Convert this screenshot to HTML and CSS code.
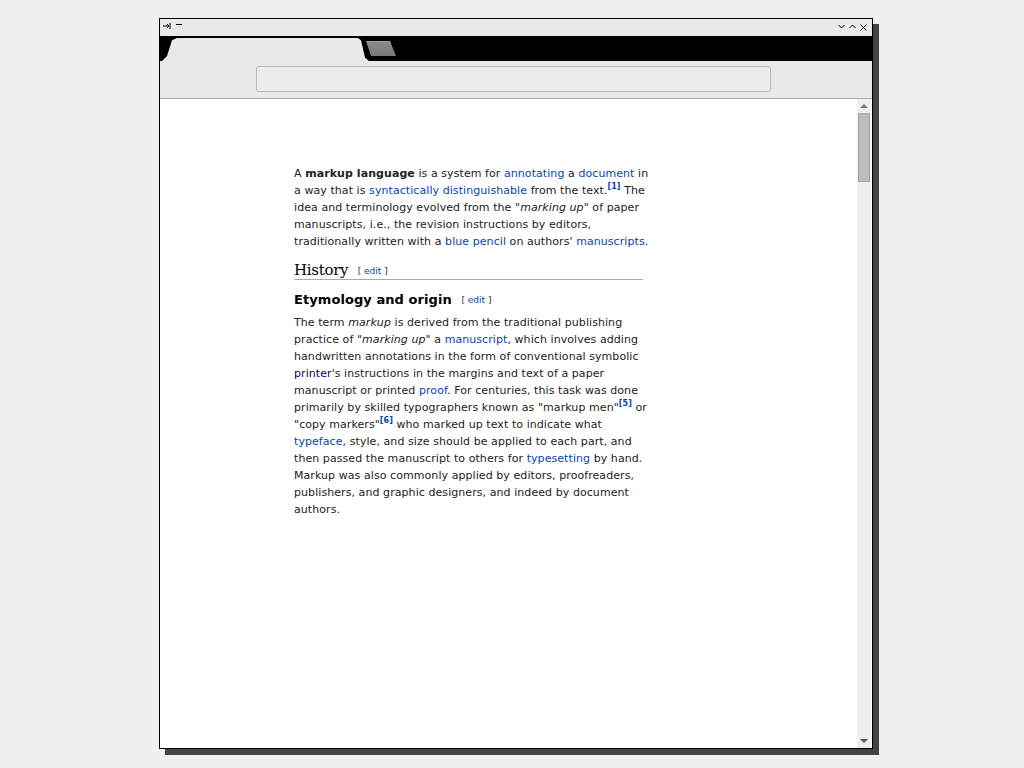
FILE: index.html
```html
<!DOCTYPE html>
<html lang="en">
<head>
  <meta charset="UTF-8">
  <title>Markup language</title>
  <link rel="stylesheet" href="styles.css">
</head>
<body>
  <div id="window">
    <div class="titlebar">
      <div class="title-left">
        <svg width="8" height="6" viewBox="0 0 8 6"><path d="M0 3H6M4 1L6 3L4 5M7 0V6" stroke="#000" fill="none"/></svg>
        <svg width="6" height="6" viewBox="0 0 6 6"><path d="M0 1.5H6" stroke="#000"/></svg>
      </div>
      <div class="title-right">
        <svg width="7" height="5" viewBox="0 0 7 5"><path d="M0.5 1L3.5 4L6.5 1" stroke="#000" fill="none"/></svg>
        <svg width="7" height="5" viewBox="0 0 7 5"><path d="M0.5 4L3.5 1L6.5 4" stroke="#000" fill="none"/></svg>
        <svg width="7" height="7" viewBox="0 0 7 7"><path d="M0.5 0.5L6.5 6.5M6.5 0.5L0.5 6.5" stroke="#000" fill="none"/></svg>
      </div>
    </div>

    <div class="tabstrip">
      <div class="tab active"></div>
      <div class="tab inactive"></div>
    </div>

    <div class="toolbar">
      <div class="address"></div>
    </div>

    <div class="viewport">
      <div class="page">
        <div class="article">
          <p>A <b>markup language</b> is a system for <a href="#">annotating</a> a <a href="#">document</a> in a way that is <a href="#">syntactically distinguishable</a> from the text.<sup><a href="#">[1]</a></sup> The idea and terminology evolved from the "<i>marking up</i>" of paper manuscripts, i.e., the revision instructions by editors, traditionally written with a <a href="#">blue pencil</a> on authors' <a href="#">manuscripts</a>.</p>

          <h2>History <span class="editsection">[ <a href="#">edit</a> ]</span></h2>

          <h3>Etymology and origin <span class="editsection">[ <a href="#">edit</a> ]</span></h3>

          <p>The term <i>markup</i> is derived from the traditional publishing practice of "<i>marking up</i>" a <a href="#">manuscript</a>, which involves adding handwritten annotations in the form of conventional symbolic <a href="#" class="visited">printer</a>'s instructions in the margins and text of a paper manuscript or printed <a href="#">proof</a>. For centuries, this task was done primarily by skilled typographers known as "markup men"<sup><a href="#">[5]</a></sup> or "copy markers"<sup><a href="#">[6]</a></sup> who marked up text to indicate what <a href="#">typeface</a>, style, and size should be applied to each part, and then passed the manuscript to others for <a href="#">typesetting</a> by hand. Markup was also commonly applied by editors, proofreaders, publishers, and graphic designers, and indeed by document authors.</p>
        </div>
      </div>

      <div class="scrollbar">
        <div class="arrow up"></div>
        <div class="track"><div class="thumb"></div></div>
        <div class="arrow down"></div>
      </div>
    </div>
  </div>
</body>
</html>
```

FILE: styles.css
```css
html, body {
  margin: 0;
  padding: 0;
}

body {
  background: #f0f0f0;
  font-family: "DejaVu Sans", sans-serif;
  width: 1024px;
  height: 768px;
  overflow: hidden;
}

#window {
  margin: 18px 0 0 159px;
  width: 712px;
  height: 729px;
  border: 1px solid #000;
  background: #e9e9e9;
  box-shadow: 6px 6px 0 #444;
  display: flex;
  flex-direction: column;
}

.titlebar {
  height: 17px;
  display: flex;
  justify-content: space-between;
  align-items: flex-start;
  padding: 0 5px 0 3px;
}

.title-left, .title-right {
  display: flex;
  gap: 5px;
  padding-top: 4px;
}

.title-right {
  gap: 4px;
  padding-top: 5px;
}

.tabstrip {
  height: 25px;
  background: #000;
  display: flex;
  align-items: flex-end;
}

.tab.active {
  width: 207px;
  height: 23px;
  margin-left: 2px;
  background: #e9e9e9;
  clip-path: polygon(0 100%, 5px 78%, 10px 10%, 15px 0, 196px 0, 199px 10%, 203px 85%, 207px 100%);
}

.tab.inactive {
  width: 30px;
  height: 14px;
  margin: 0 0 5px -3px;
  align-self: flex-end;
  background: linear-gradient(#8a8a8a, #7a7a7a);
  border-top: 1px solid #a0a0a0;
  clip-path: polygon(0 0, 24px 0, 30px 100%, 5px 100%);
}

.toolbar {
  height: 37px;
  border-bottom: 1px solid #a8a8a8;
  display: flex;
  justify-content: center;
  align-items: flex-start;
}

.address {
  width: 513px;
  height: 24px;
  margin: 5px 0 0 -6px;
  border: 1px solid #b8b8b8;
  border-radius: 3px;
  background: #ececec;
}

.viewport {
  flex: 1;
  display: flex;
  background: #fff;
  min-height: 0;
}

.page {
  flex: 1;
}

.article {
  width: 362px;
  margin: 66px 0 0 134px;
  font-size: 11px;
  line-height: 17px;
  letter-spacing: 0.07px;
  color: #222;
}

.article p {
  margin: 0;
}

.article a {
  color: #0645ad;
  text-decoration: none;
}

.article a.visited {
  color: #0b0080;
}

.article sup {
  font-size: 8px;
  line-height: 0;
  font-weight: bold;
  vertical-align: 5px;
}

.article h2 {
  font-family: "DejaVu Serif", serif;
  font-weight: normal;
  font-size: 15px;
  line-height: 16px;
  letter-spacing: -0.3px;
  margin: 12px 0 0 0;
  width: 349px;
  padding-bottom: 0;
  border-bottom: 1px solid #aaa;
  color: #000;
}

.article h3 {
  font-size: 13px;
  line-height: 18px;
  font-weight: bold;
  margin: 11px 0 5px 0;
  color: #000;
}

.editsection {
  font-family: "DejaVu Sans", sans-serif;
  font-size: 9px;
  letter-spacing: 0;
  font-weight: normal;
  margin-left: 5px;
  color: #333;
  vertical-align: 1px;
}

.scrollbar {
  width: 14px;
  background: #eee;
  display: flex;
  flex-direction: column;
  margin-right: 1px;
}

.arrow {
  height: 14px;
  display: flex;
  justify-content: center;
  align-items: center;
}

.arrow.up::before {
  content: "";
  border-left: 4px solid transparent;
  border-right: 4px solid transparent;
  border-bottom: 4px solid #777;
}

.arrow.down::before {
  content: "";
  border-left: 4px solid transparent;
  border-right: 4px solid transparent;
  border-top: 4px solid #555;
}

.track {
  flex: 1;
}

.thumb {
  margin: 0 1px;
  height: 69px;
  background: #bcbcbc;
  border: 1px solid #a6a6a6;
  box-sizing: border-box;
}
```
